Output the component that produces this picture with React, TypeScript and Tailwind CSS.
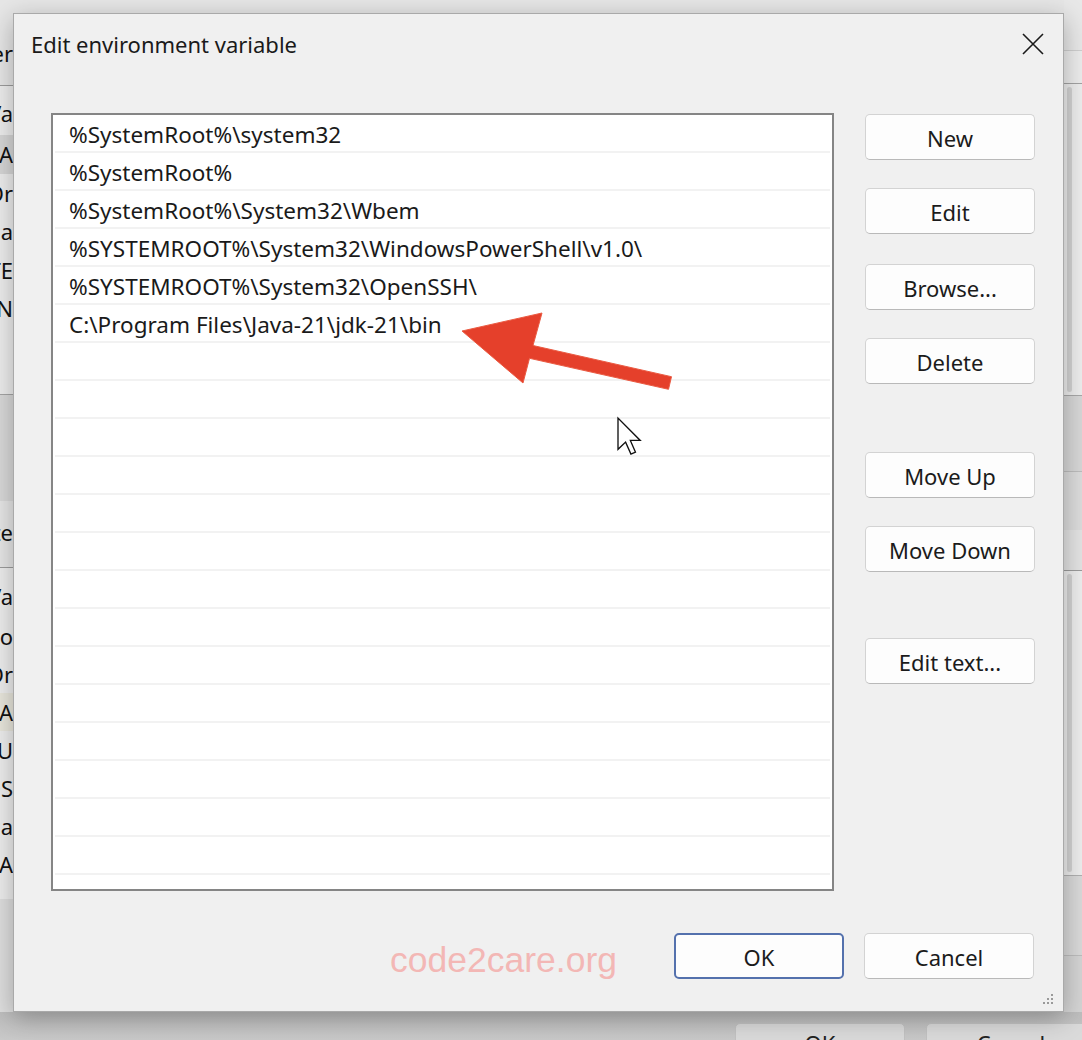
import React from "react";

const paths = [
    "%SystemRoot%\\system32",
    "%SystemRoot%",
    "%SystemRoot%\\System32\\Wbem",
    "%SYSTEMROOT%\\System32\\WindowsPowerShell\\v1.0\\",
    "%SYSTEMROOT%\\System32\\OpenSSH\\",
    "C:\\Program Files\\Java-21\\jdk-21\\bin",
];

const TOTAL_ROWS = 21;

function WinButton({ label, className = "", primary = false }: { label: string; className?: string; primary?: boolean }) {
    return (
        <button
            className={`w-[170px] h-[46px] rounded-[5px] bg-[#fdfdfd] text-[22px] text-[#1b1b1b] flex items-center justify-center pt-[2px] ${
                primary
                    ? "border-2 border-[#5471ad]"
                    : "border border-[#d3d3d3] border-b-[#b9b9b9]"
            } ${className}`}
        >
            {label}
        </button>
    );
}

// clipped bits of the Environment Variables window behind the dialog
function Frag({ text, h = "h-[38px]", bg = "" }: { text: string; h?: string; bg?: string }) {
    return (
        <div className={`${h} ${bg} flex items-center justify-end whitespace-nowrap text-[22px] text-[#111]`}>
            {text}
        </div>
    );
}

function LeftStrip() {
    return (
        <div className="w-[13px] flex flex-col bg-[#e6e6e6]">
            <div className="h-[34px]" />
            <Frag text="Us er" />
            <div className="h-[13px]" />
            <div className="h-px bg-[#9c9c9c]" />
            <div className="bg-[#ededed] flex flex-col">
                <div className="h-[8px]" />
                <Frag text="Va" />
                <div className="h-[3px]" />
                <Frag text="PA" h="h-[39px]" bg="bg-[#d6d6d6]" />
                <Frag text="Or" />
                <Frag text="Pa" h="h-[39px]" />
                <Frag text="TE" />
                <Frag text="TN" />
                <div className="h-[67px]" />
            </div>
            <div className="h-px bg-[#a5a5a5]" />
            <div className="h-[106px] bg-[#d9d9d9]" />
            <div className="h-[12px]" />
            <Frag text="Syste" />
            <div className="h-[16px]" />
            <div className="h-px bg-[#9c9c9c]" />
            <div className="bg-[#ededed] flex flex-col">
                <div className="h-[9px]" />
                <Frag text="Va" />
                <div className="h-[2px]" />
                <Frag text="Co" />
                <Frag text="Or" />
                <Frag text="A" bg="bg-[#e8e6dc]" />
                <Frag text="NU" />
                <Frag text="OS" />
                <Frag text="Pa" />
                <Frag text="PA" />
                <div className="h-[16px]" />
            </div>
            <div className="flex-1 bg-[#dedede]" />
        </div>
    );
}

function RightStrip() {
    return (
        <div className="w-[18px] flex flex-col bg-[#e8e8e8]">
            <div className="h-[50px]" />
            <div className="h-px bg-[#cfcfcf]" />
            <div className="h-[32px] bg-[#ececec]" />
            <div className="h-px bg-[#a3a3a3]" />
            <div className="h-[311px] bg-[#ededed] flex">
                <div className="w-[3px]" />
                <div className="w-[5px] bg-[#d2d2d2] my-[3px] rounded-sm" />
            </div>
            <div className="h-px bg-[#a8a8a8]" />
            <div className="h-[75px] bg-[#d7d7d7]" />
            <div className="h-px bg-[#bdbdbd]" />
            <div className="h-[58px] bg-[#dcdcdc]" />
            <div className="h-[40px] bg-[#e3e3e3]" />
            <div className="h-px bg-[#9c9c9c]" />
            <div className="h-[304px] bg-[#ededed] flex">
                <div className="w-[3px]" />
                <div className="w-[5px] bg-[#d2d2d2] my-[3px] rounded-sm" />
            </div>
            <div className="h-px bg-[#b0b0b0]" />
            <div className="h-[79px] bg-[#d9d9d9]" />
            <div className="h-px bg-[#bdbdbd]" />
            <div className="flex-1 bg-[#d4d4d4]" />
        </div>
    );
}

function CloseIcon() {
    return (
        <svg width="22" height="22" viewBox="0 0 22 22" className="text-[#1a1a1a]">
            <path d="M1 1 L21 21 M21 1 L1 21" stroke="currentColor" strokeWidth="1.6" fill="none" />
        </svg>
    );
}

function ResizeGrip() {
    const dots = [
        [10, 2],
        [6, 6],
        [10, 6],
        [2, 10],
        [6, 10],
        [10, 10],
    ];
    return (
        <svg width="13" height="13" viewBox="0 0 13 13" className="absolute right-[9px] bottom-[6px]">
            {dots.map(([x, y]) => (
                <rect key={`${x}-${y}`} x={x} y={y} width="2" height="2" fill="#9a9a9a" />
            ))}
        </svg>
    );
}

function PathList() {
    const rows = Array.from({ length: TOTAL_ROWS }, (_, i) => paths[i] ?? "");
    return (
        <div className="w-[783px] h-[778px] shrink-0 bg-white border-2 border-[#858585] overflow-hidden">
            {rows.map((p, i) => (
                <div key={i} className="h-[38px] px-[2px]">
                    <div className="h-full flex items-center pl-[14px] pt-[4px] border-b-2 border-[#f2f2f2] text-[22.5px] text-[#1a1a1a] whitespace-nowrap">
                        {p}
                    </div>
                </div>
            ))}
        </div>
    );
}

function EditDialog() {
    return (
        <div className="absolute left-[13px] top-[13px] w-[1051px] h-[999px] bg-[#f0f0f0] border border-[#a9a9a9] shadow-[0_6px_24px_rgba(0,0,0,0.28)] flex flex-col">
            {/* Title bar */}
            <div className="h-[99px] shrink-0 flex items-start justify-between pl-[17px] pr-[19px] pt-[14px]">
                <span className="text-[22px] leading-[32px] text-[#1a1a1a]">Edit environment variable</span>
                <div className="mt-[5px]">
                    <CloseIcon />
                </div>
            </div>

            {/* Body */}
            <div className="flex gap-[31px] pl-[37px] shrink-0">
                <PathList />
                <div className="flex flex-col">
                    <WinButton label="New" className="mt-[1px]" />
                    <WinButton label="Edit" className="mt-[28px]" />
                    <WinButton label="Browse..." className="mt-[30px]" />
                    <WinButton label="Delete" className="mt-[28px]" />
                    <WinButton label="Move Up" className="mt-[68px]" />
                    <WinButton label="Move Down" className="mt-[28px]" />
                    <WinButton label="Edit text..." className="mt-[66px]" />
                </div>
            </div>

            {/* Footer */}
            <div className="mt-[42px] flex justify-end gap-[20px] pr-[29px]">
                <WinButton label="OK" primary />
                <WinButton label="Cancel" />
            </div>

            {/* watermark */}
            <span className="absolute left-[376px] top-[920px] text-[35.5px] text-[#f3b7b5] font-['Liberation_Sans',Arial,sans-serif]">
                code2care.org
            </span>

            <ResizeGrip />
        </div>
    );
}

function Annotations() {
    return (
        <svg width="1082" height="1040" viewBox="0 0 1082 1040" className="absolute inset-0 pointer-events-none">
            <polygon
                points="462,331 542,313 533,345.5 671.5,376.7 668.5,389.3 529.5,358.3 523,383"
                fill="#e5402b"
                stroke="#ea5a42"
                strokeWidth="1"
                strokeLinejoin="round"
            />
            <path
                d="M0 0 L0 16.5 L4 12.7 L6.8 19 L9.2 18 L6.5 11.8 L11.7 11.8 Z"
                transform="translate(618 418) scale(1.9)"
                fill="#ffffff"
                stroke="#111"
                strokeWidth="0.7"
                strokeLinejoin="miter"
            />
        </svg>
    );
}

export default function App() {
    return (
        <div className="relative w-[1082px] h-[1040px] overflow-hidden bg-[#e4e4e4] font-['Noto_Sans','Open_Sans',sans-serif]">
            <div className="flex flex-col h-full">
                <div className="h-[1012px] shrink-0 flex">
                    <LeftStrip />
                    <div className="flex-1 bg-[#e6e6e6]" />
                    <RightStrip />
                </div>
                {/* bottom of the window behind */}
                <div className="flex-1 min-h-0 overflow-hidden bg-gradient-to-b from-[#bdbdbd] to-[#c9c9c9] flex pl-[735px] gap-[21px] pt-[11px]">
                    <div className="w-[170px] h-[40px] shrink-0 rounded-[5px] bg-[#dadada] border border-[#c2c2c2] flex justify-center pt-[3px] text-[22px] text-[#222]">
                        OK
                    </div>
                    <div className="w-[170px] h-[40px] shrink-0 rounded-[5px] bg-[#dadada] border border-[#c2c2c2] flex justify-center pt-[3px] text-[22px] text-[#222]">
                        Cancel
                    </div>
                </div>
            </div>
            <EditDialog />
            <Annotations />
        </div>
    );
}
